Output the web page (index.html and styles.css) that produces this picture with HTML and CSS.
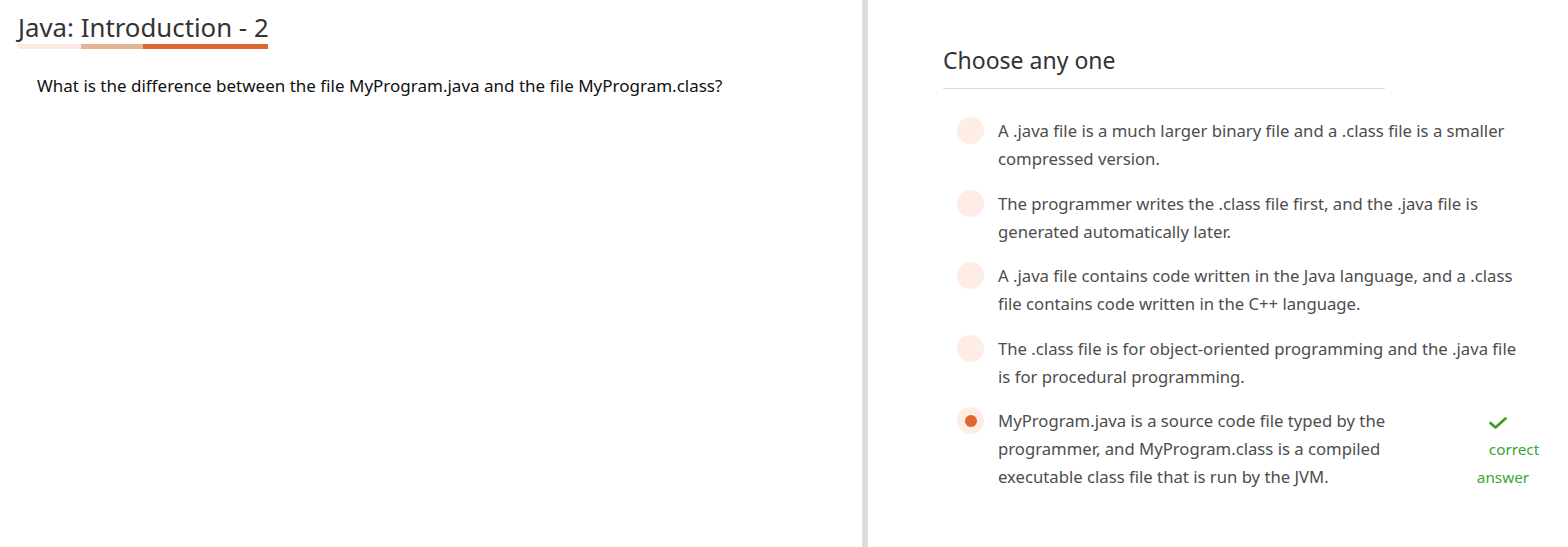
FILE: index.html
```html
<!DOCTYPE html>
<html>
<head>
<meta charset="utf-8">
<link rel="stylesheet" href="styles.css">
</head>
<body>
<div class="page">
  <section class="left">
    <div class="title-wrap">
      <h1 class="title">Java: Introduction - 2</h1>
      <div class="title-bar"><span class="seg seg1"></span><span class="seg seg2"></span><span class="seg seg3"></span></div>
    </div>
    <p class="question">What is the difference between the file MyProgram.java and the file MyProgram.class?</p>
  </section>
  <div class="divider"></div>
  <section class="right">
    <h2 class="choose">Choose any one</h2>
    <ul class="options">
      <li class="option"><span class="radio"></span><span class="opt-text">A .java file is a much larger binary file and a .class file is a smaller compressed version.</span></li>
      <li class="option"><span class="radio"></span><span class="opt-text">The programmer writes the .class file first, and the .java file is generated automatically later.</span></li>
      <li class="option"><span class="radio"></span><span class="opt-text">A .java file contains code written in the Java language, and a .class file contains code written in the C++ language.</span></li>
      <li class="option"><span class="radio"></span><span class="opt-text">The .class file is for object-oriented programming and the .java file is for procedural programming.</span></li>
      <li class="option selected"><span class="radio"><span class="dot"></span></span><span class="opt-text narrow">MyProgram.java is a source code file typed by the programmer, and MyProgram.class is a compiled executable class file that is run by the JVM.</span>
        <span class="result">
          <span class="check"><svg width="18" height="12" viewBox="0 0 18 12"><path d="M1.5 6 L6.5 10.5 L16.5 1.5" fill="none" stroke="#3f9a1f" stroke-width="2.6" stroke-linecap="round" stroke-linejoin="round"/></svg></span>
          <span class="res-line res-correct">correct</span>
          <span class="res-line res-answer">answer</span>
        </span>
      </li>
    </ul>
  </section>
</div>
</body>
</html>
```

FILE: styles.css
```css
html, body {
  margin: 0;
  padding: 0;
  background: #ffffff;
}
body {
  font-family: "Noto Sans", "Open Sans", sans-serif;
}
.page {
  display: flex;
  height: 547px;
}
.left {
  width: 862px;
  box-sizing: border-box;
  padding: 10px 0 0 18px;
}
.title-wrap {
  display: inline-flex;
  flex-direction: column;
}
.title {
  margin: 0;
  font-size: 25.8px;
  font-weight: 400;
  line-height: 34px;
  color: #333333;
}
.title-bar {
  display: flex;
  height: 5px;
  width: 250px;
}
.seg { display: block; height: 5px; }
.seg1 { width: 63px; background: #fde8df; }
.seg2 { width: 62px; background: #e2b598; }
.seg3 { flex: 1; background: #e0662f; }
.question {
  margin: 25px 0 0 19px;
  font-size: 17px;
  line-height: 24px;
  color: #111111;
}
.divider {
  width: 6px;
  background: #dcdcdc;
}
.right {
  flex: 1;
  box-sizing: border-box;
  padding: 42px 30px 0 75px;
}
.choose {
  margin: 0;
  width: 442px;
  font-size: 23px;
  font-weight: 400;
  line-height: 36px;
  color: #333333;
  padding-bottom: 10px;
  border-bottom: 1px solid #dddddd;
}
.options {
  list-style: none;
  margin: 28px 0 0 14px;
  padding: 0;
  display: flex;
  flex-direction: column;
  gap: 16.5px;
  width: 572px;
}
.option {
  display: flex;
  align-items: flex-start;
  font-size: 16.7px;
  line-height: 28px;
  color: #4d4d4d;
}
.radio {
  flex: none;
  width: 27px;
  height: 27px;
  border-radius: 50%;
  background: #fdede5;
  margin: 0 14px 0 0;
  display: flex;
  align-items: center;
  justify-content: center;
}
.dot {
  width: 12px;
  height: 12px;
  border-radius: 50%;
  background: #e0662f;
}
.opt-text { flex: 1; }
.opt-text.narrow { flex: none; width: 460px; }
.result {
  width: 80px;
  display: flex;
  flex-direction: column;
  align-items: center;
  color: #3aa634;
  font-size: 15.3px;
  line-height: 28px;
}
.check {
  height: 28px;
  display: flex;
  align-items: center;
  justify-content: center;
  padding-top: 3px;
  box-sizing: border-box;
}
.check svg { display: block; }
.res-correct { padding-left: 32px; }
.res-answer { padding-left: 10px; }
```
